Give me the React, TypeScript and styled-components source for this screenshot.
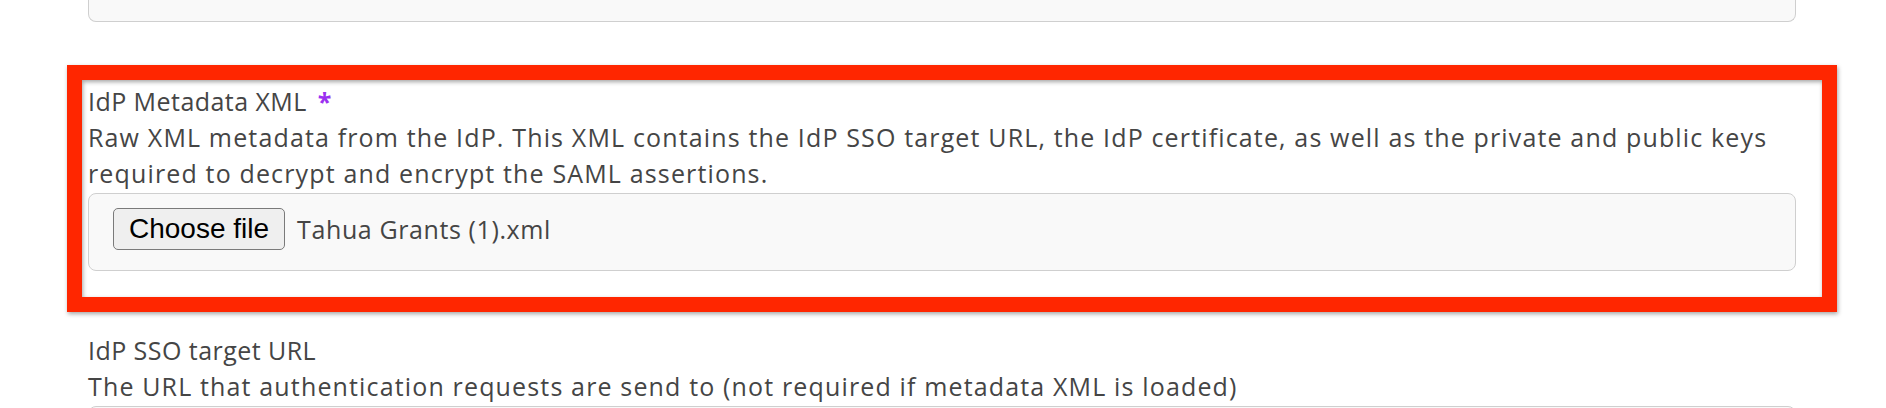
import React from 'react';
import styled, { createGlobalStyle } from 'styled-components';

const Global = createGlobalStyle`
  html, body { margin: 0; padding: 0; background: #ffffff; }
  body {
    font-family: "Open Sans", "Noto Sans", sans-serif;
    color: #454545;
    overflow: hidden;
  }
`;

const Page = styled.div`
  width: 1886px;
  height: 408px;
  overflow: hidden;
  box-sizing: border-box;
  padding-left: 88px;
`;

const Column = styled.div`
  width: 1708px;
  display: flex;
  flex-direction: column;
`;

const PrevInput = styled.div`
  height: 22px;
  box-sizing: border-box;
  background: #f9f9f9;
  border: 1.5px solid #cfcfcf;
  border-top: none;
  border-radius: 0 0 8px 8px;
`;

const Field = styled.div`
  position: relative;
  margin-top: 61px;
  display: flex;
  flex-direction: column;
`;

const Highlight = styled.div`
  position: absolute;
  top: -18px;
  left: -21px;
  right: -41px;
  bottom: -41px;
  border: 15px solid #ff2600;
  pointer-events: none;
  filter: drop-shadow(1px 2px 2px rgba(0, 0, 0, 0.35));
`;

const Label = styled.label`
  font-size: 25px;
  line-height: 36px;
  letter-spacing: 0.45px;
  color: #454545;
`;

const Required = styled.span`
  color: #9b30f0;
  margin-left: 4px;
  font-weight: 700;
`;

const Help = styled.div`
  font-size: 25px;
  line-height: 36px;
  letter-spacing: 1.15px;
  color: #454545;
`;

const InputBox = styled.div`
  margin-top: 2px;
  height: 78px;
  box-sizing: border-box;
  background: #f9f9f9;
  border: 1.5px solid #cfcfcf;
  border-radius: 8px;
  display: flex;
  align-items: flex-start;
  padding: 13.5px 24px;
  gap: 12px;
`;

const FileButton = styled.button`
  height: 42px;
  padding: 0 15px;
  font-family: "Liberation Sans", Arial, sans-serif;
  font-size: 28px;
  color: #000;
  background: #efefef;
  border: 1.5px solid #7a7a7a;
  border-radius: 5px;
`;

const FileName = styled.span`
  font-size: 25px;
  line-height: 42px;
  letter-spacing: 0.6px;
  color: #454545;
`;

export default function App() {
  return (
    <>
      <Global />
      <Page>
        <Column>
          <PrevInput />
          <Field>
            <Label>
              IdP Metadata XML <Required>*</Required>
            </Label>
            <Help>
              Raw XML metadata from the IdP. This XML contains the IdP SSO target URL, the IdP certificate, as well as the private and public keys required to decrypt and encrypt the SAML assertions.
            </Help>
            <InputBox>
              <FileButton type="button">Choose file</FileButton>
              <FileName>Tahua Grants (1).xml</FileName>
            </InputBox>
            <Highlight />
          </Field>
          <Field>
            <Label>IdP SSO target URL</Label>
            <Help>The URL that authentication requests are send to (not required if metadata XML is loaded)</Help>
            <InputBox />
          </Field>
        </Column>
      </Page>
    </>
  );
}
